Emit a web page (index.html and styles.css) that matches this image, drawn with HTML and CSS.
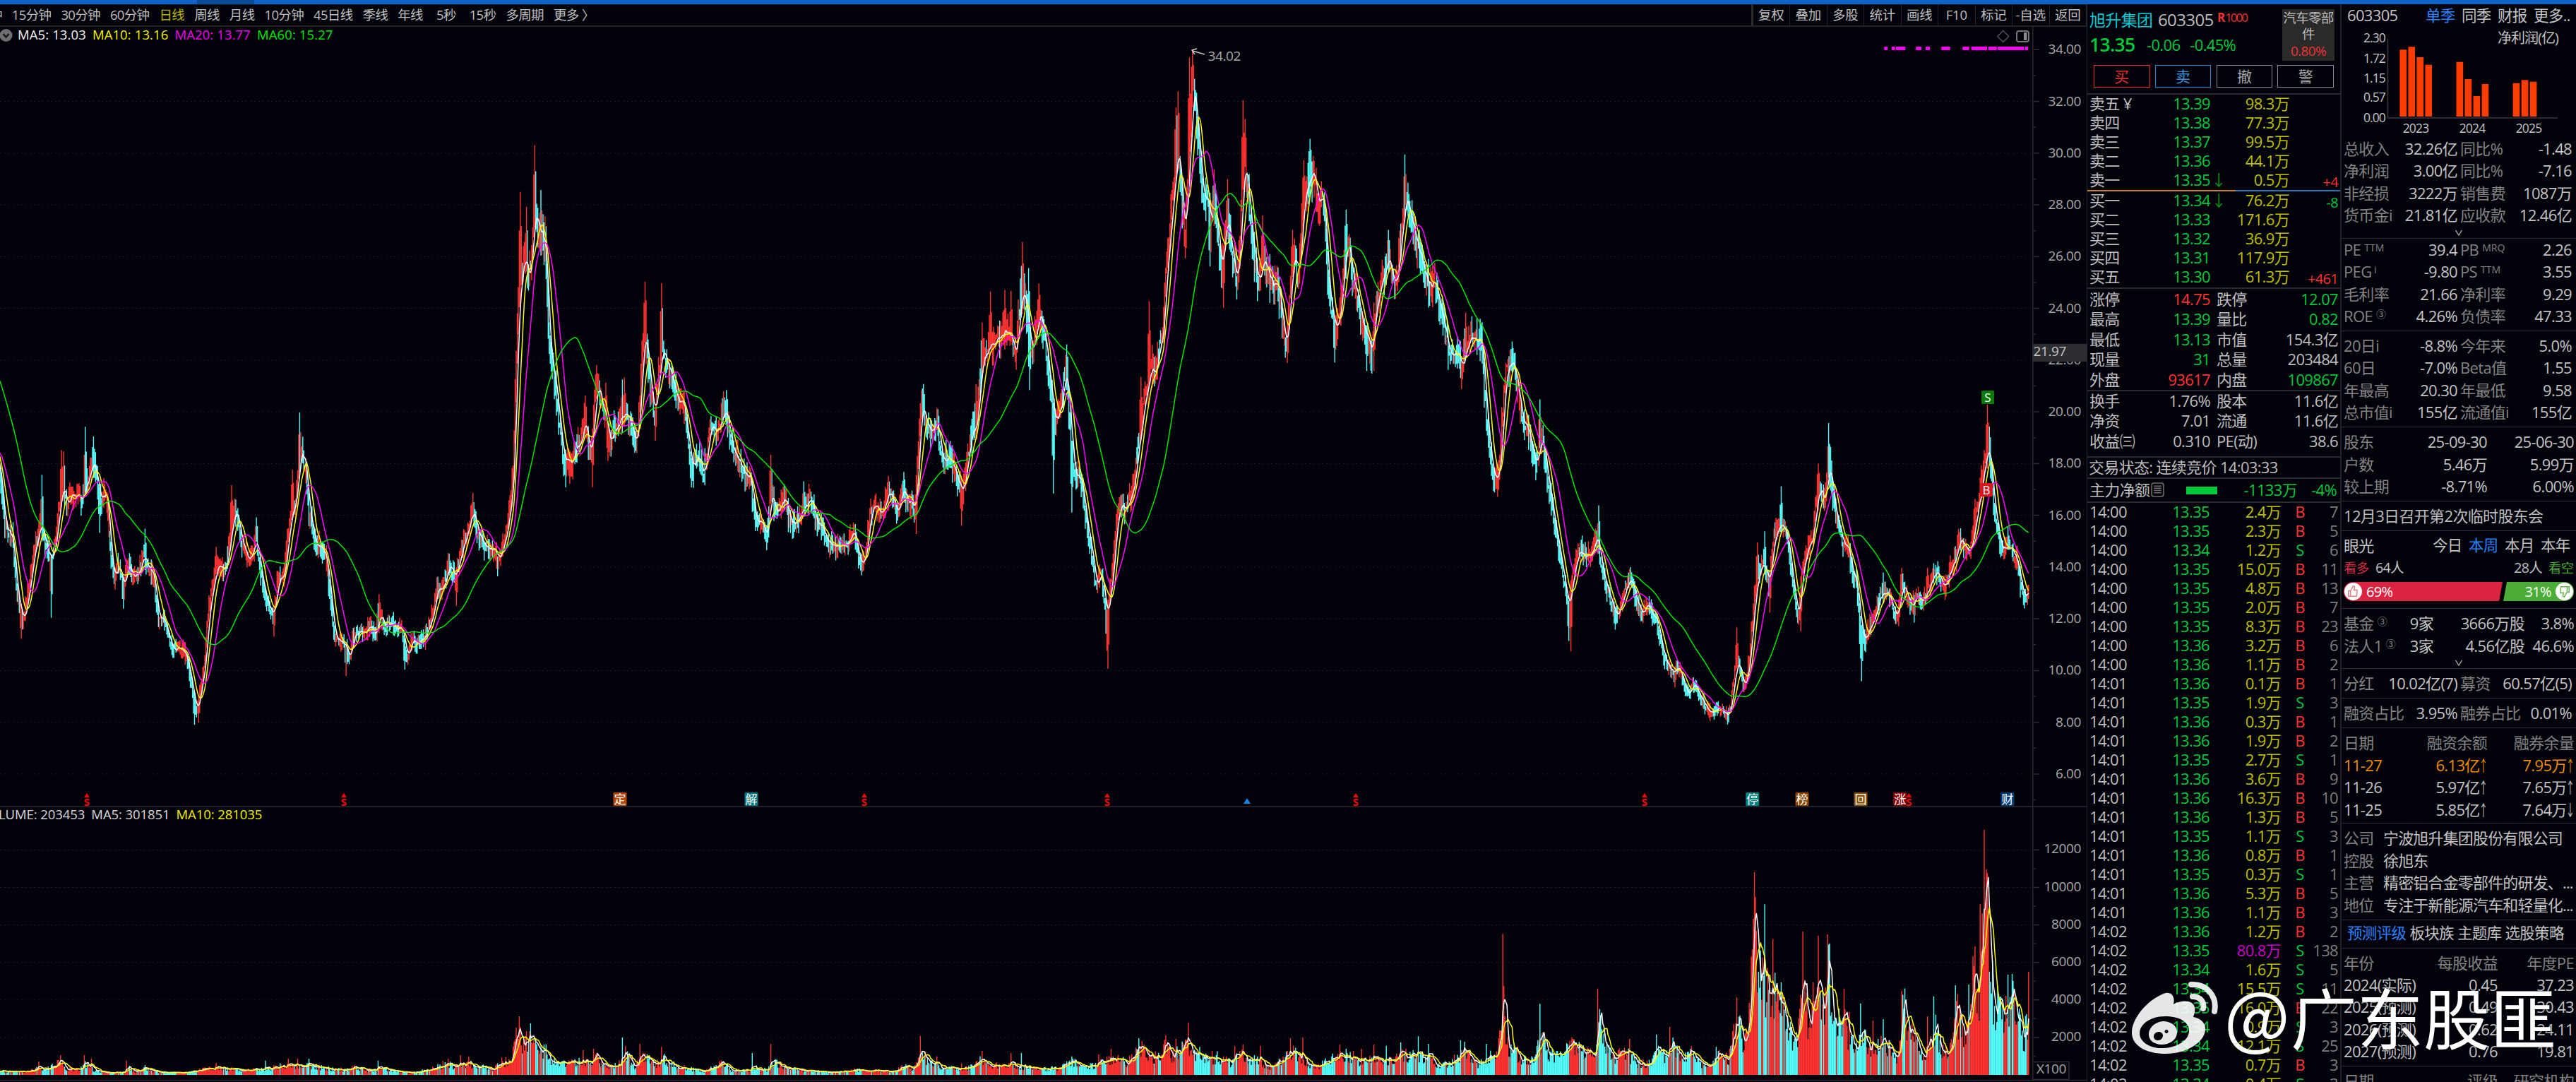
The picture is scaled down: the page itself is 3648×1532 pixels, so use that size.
FILE: index.html
```html
<!DOCTYPE html>
<html lang="zh-CN">
<head>
<meta charset="utf-8">
<title>旭升集团 603305 日线</title>
<link rel="stylesheet" href="styles.css">
</head>
<body>
<div class="titlebar"><i></i></div>
<div class="app">
  <main class="chart">
    <nav class="toolbar">
      <div class="periods"><span class="cut">钟</span><span>15分钟</span><span>30分钟</span><span>60分钟</span><span class="on">日线</span><span>周线</span><span>月线</span><span>10分钟</span><span>45日线</span><span>季线</span><span>年线</span><span class="wide">5秒</span><span class="wide">15秒</span><span>多周期</span><span>更多 〉</span></div>
      <div class="tools"><span>复权</span><span>叠加</span><span>多股</span><span>统计</span><span>画线</span><span>F10</span><span>标记</span><span>-自选</span><span>返回</span></div>
    </nav>
    <section class="pane price">
      <svg id="price" viewBox="0 38 2955 1105"></svg>
      <div class="legend top">
        <svg class="fold" viewBox="0 0 18 18"><circle cx="8.5" cy="9" r="9"/><path d="M4.5 7l4 4.5 4-4.5"/></svg>
        <span class="c-w">MA5: 13.03</span><span class="c-y">MA10: 13.16</span><span class="c-m">MA20: 13.77</span><span class="c-g">MA60: 15.27</span>
      </div>
    </section>
    <section class="pane volume">
      <svg id="volume" viewBox="0 1144 2955 388"></svg>
      <div class="legend bottom"><span>LUME: 203453</span><span>MA5: 301851</span><span class="c-y">MA10: 281035</span></div>
    </section>
  </main>

  <aside class="quote">
    <header class="head">
      <div class="id">
        <div class="name"><b>旭升集团</b><span>603305</span><em><strong>R</strong>1000</em></div>
        <div class="last"><b>13.35</b><span>-0.06</span><span>-0.45%</span></div>
      </div>
      <div class="sector">汽车零部<br>件<br><em>0.80%</em></div>
    </header>
    <div class="buttons"><button class="buy">买</button><button class="sell">卖</button><button>撤</button><button>警</button></div>
    <div class="book asks" id="asks"></div>
    <div class="book bids" id="bids"></div>
    <div class="stats five">
      <div><span>涨停</span><b class="r">14.75</b><span>跌停</span><b class="g">12.07</b></div>
      <div><span>最高</span><b class="g">13.39</b><span>量比</span><b class="g">0.82</b></div>
      <div><span>最低</span><b class="g">13.13</b><span>市值</span><b>154.3亿</b></div>
      <div><span>现量</span><b class="g">31</b><span>总量</span><b>203484</b></div>
      <div><span>外盘</span><b class="r">93617</b><span>内盘</span><b class="g">109867</b></div>
    </div>
    <div class="stats three">
      <div><span>换手</span><b>1.76%</b><span>股本</span><b>11.6亿</b></div>
      <div><span>净资</span><b>7.01</b><span>流通</span><b>11.6亿</b></div>
      <div><span>收益㈢</span><b>0.310</b><span>PE(动)</span><b>38.6</b></div>
    </div>
    <div class="status">交易状态: 连续竞价 14:03:33</div>
    <div class="flow"><span>主力净额</span>
      <svg viewBox="0 0 18 20"><rect x="1" y="1" width="16" height="18" rx="3"/><path d="M4 5h10M4 8h10M4 11h10M4 14h10"/></svg>
      <i></i><b>-1133万</b><b class="pct">-4%</b></div>
    <div class="ticks" id="ticks"></div>
  </aside>

  <aside class="info">
    <header class="tabs first"><span class="code">603305</span><span class="on">单季</span><span>同季</span><span>财报</span><span>更多..</span></header>
    <svg class="mini" id="mini" viewBox="3314 38 334 152"></svg>
    <section class="s-income">
      <div class="pair"><i>总收入</i><b>32.26亿</b><i>同比%</i><b>-1.48</b></div>
      <div class="pair"><i>净利润</i><b>3.00亿</b><i>同比%</i><b>-7.16</b></div>
      <div class="pair"><i>非经损</i><b>3222万</b><i>销售费</i><b>1087万</b></div>
      <div class="pair"><i>货币金i</i><b>21.81亿</b><i>应收款</i><b>12.46亿</b></div>
      <svg class="chev" viewBox="0 0 12 10"><path d="M1 1l5 8 5-8"/></svg>
    </section>
    <section class="s-ratio">
      <div class="pair"><i>PE <sup>TTM</sup></i><b>39.4</b><i>PB <sup>MRQ</sup></i><b>2.26</b></div>
      <div class="pair"><i>PEG<sup> i</sup></i><b>-9.80</b><i>PS <sup>TTM</sup></i><b>3.55</b></div>
      <div class="pair"><i>毛利率</i><b>21.66</b><i>净利率</i><b>9.29</b></div>
      <div class="pair"><i>ROE <sup>③</sup></i><b>4.26%</b><i>负债率</i><b>47.33</b></div>
    </section>
    <section>
      <div class="pair"><i>20日i</i><b>-8.8%</b><i>今年来</i><b>5.0%</b></div>
      <div class="pair"><i>60日</i><b>-7.0%</b><i>Beta值</i><b>1.55</b></div>
      <div class="pair"><i>年最高</i><b>20.30</b><i>年最低</i><b>9.58</b></div>
      <div class="pair"><i>总市值i</i><b>155亿</b><i>流通值i</i><b>155亿</b></div>
    </section>
    <section>
      <div class="tri"><i>股东</i><b>25-09-30</b><b>25-06-30</b></div>
      <div class="tri"><i>户数</i><b>5.46万</b><b>5.99万</b></div>
      <div class="tri"><i>较上期</i><b>-8.71%</b><b>6.00%</b></div>
    </section>
    <section><div class="line">12月3日召开第2次临时股东会</div></section>
    <section class="s-vote">
      <div class="tabs"><span class="lead">眼光</span><span>今日</span><span class="on">本周</span><span>本月</span><span>本年</span></div>
      <div class="people"><em class="long">看多</em><span>64人</span><span class="push">28人</span><em class="short">看空</em></div>
      <div class="bar"><div class="up"><svg viewBox="0 0 28 28"><circle cx="14" cy="14" r="13"/><path d="M7 13h3v8H7zM10 13l4-7c3 0 2 3 1 6h5l-1 9h-9"/></svg>69%</div><div class="down">31%<svg viewBox="0 0 28 28"><circle cx="14" cy="14" r="13"/><path d="M21 15h-3V7h3zM18 15l-4 7c-3 0-2-3-1-6H8l1-9h9"/></svg></div></div>
    </section>
    <section class="s-fund">
      <div class="quad"><i>基金 <sup>③</sup></i><b>9家</b><b>3666万股</b><b>3.8%</b></div>
      <div class="quad"><i>法人1 <sup>③</sup></i><b>3家</b><b>4.56亿股</b><b>46.6%</b></div>
      <svg class="chev" viewBox="0 0 12 10"><path d="M1 1l5 8 5-8"/></svg>
    </section>
    <section><div class="pair"><i>分红</i><b>10.02亿(7)</b><i>募资</i><b>60.57亿(5)</b></div></section>
    <section><div class="pair"><i>融资占比</i><b>3.95%</b><i>融券占比</i><b>0.01%</b></div></section>
    <section class="s-margin">
      <div class="tri"><i>日期</i><i>融资余额</i><i>融券余量</i></div>
      <div class="tri hot"><b>11-27</b><b>6.13亿<u>↑</u></b><b>7.95万<u>↑</u></b></div>
      <div class="tri"><b>11-26</b><b>5.97亿<u>↑</u></b><b>7.65万<u>↑</u></b></div>
      <div class="tri"><b>11-25</b><b>5.85亿<u>↑</u></b><b>7.64万<u>↓</u></b></div>
    </section>
    <section>
      <div class="about"><i>公司</i><span>宁波旭升集团股份有限公司</span></div>
      <div class="about"><i>控股</i><span>徐旭东</span></div>
      <div class="about"><i>主营</i><span>精密铝合金零部件的研发、...</span></div>
      <div class="about"><i>地位</i><span>专注于新能源汽车和轻量化...</span></div>
    </section>
    <section class="s-topic"><div class="topics"><span class="on">预测评级</span><span>板块族</span><span>主题库</span><span>选股策略</span></div></section>
    <section class="s-forecast">
      <div class="tri fc"><i>年份</i><i>每股收益</i><i>年度PE</i></div>
      <div class="tri fc"><b>2024(实际)</b><b>0.45</b><b>37.23</b></div>
      <div class="tri fc"><b>2025(预测)</b><b>0.49</b><b>30.43</b></div>
      <div class="tri fc"><b>2026(预测)</b><b>0.62</b><b>24.11</b></div>
      <div class="tri fc"><b>2027(预测)</b><b>0.76</b><b>19.81</b></div>
    </section>
    <section class="s-last"><div class="tri fc"><i>日期</i><i>评级</i><i>研究机构</i></div></section>
  </aside>
</div>

<div class="watermark">
  <svg viewBox="0 0 124 104">
    <path fill-rule="evenodd" d="M45 18C54 14 62 20 59 33C71 26 88 27 89 38C90 43 88 48 87 51C97 53 105 59 104 69C103 87 77 103 48 103C21 103 0 92 0 73C0 53 22 27 45 18ZM47 50C26 50 11 61 11 74C11 87 27 96 45 95C66 94 82 83 81 69C80 57 66 50 47 50Z"/>
    <path fill-rule="evenodd" d="M44 57C56 57 65 64 64 74C63 84 53 90 42 90C31 90 23 83 24 74C25 65 33 58 44 57ZM38 72C33 72 31 76 31 79C31 82 34 84 37 84C41 84 44 81 44 77C44 74 41 72 38 72ZM49 69a2.500 2.500 0 1 0 .1 0Z"/>
    <path class="wave" d="M84 5C107 4 121 22 117 43M86 22C97 22 103 30 101 39"/>
  </svg>
  <span class="at">@</span><span>广东股匪</span>
</div>
<script src="chart.js"></script>
</body>
</html>
```
FILE: styles.css
```css
* { box-sizing: border-box; }
html { height: 1532px; overflow: hidden; background: #02020a; }
body {
  margin: 0; width: 3648px; height: 1532px; overflow: hidden; position: relative;
  background: #02020a; color: #bdbdbd;
  font: 22px/27px "Open Sans", "Noto Sans CJK SC", sans-serif; letter-spacing: -0.03em;
}
b, i, em { font-weight: 400; font-style: normal; }
u { text-decoration: none; }
.titlebar { height: 6px; background: #1063c8; }
.titlebar i { display: block; width: 81px; height: 6px; margin-left: 279px; background: #0a4a98; }
.app { display: flex; height: 1526px; }

/* chart column */
.chart { width: 2955px; display: flex; flex-direction: column; }
.toolbar { height: 32px; display: flex; justify-content: space-between; border-bottom: 2px solid #242426; border-top: 1px solid #1c1c20; font-size: 18.500px; line-height: 28px; white-space: nowrap; }
.periods { display: flex; gap: 14px; margin-left: -15px; }
.periods .wide { margin-left: 5px; }
.periods .on { color: #b4b400; }
.tools { display: flex; border-left: 3px solid #2c2c2e; }
.tools span { width: 52.500px; text-align: center; border-right: 1px solid #242428; letter-spacing: -0.01em; }
.pane { position: relative; }
.pane > svg { display: block; width: 2955px; }
.price { height: 1105px; }
.volume { height: 388px; }
.price > svg { height: 1105px; overflow: visible; }
.volume > svg { height: 388px; }
.legend { position: absolute; left: 0; display: flex; font-size: 18.500px; letter-spacing: 0.006em; line-height: 22px; color: #d8d8d8; white-space: nowrap; }
.legend.top { top: 0; gap: 9px; }
.legend.bottom { top: -1px; left: -2px; gap: 9px; letter-spacing: -0.004em; }
.legend .fold { width: 18px; height: 18px; margin: 3px -2px 0 0; }
.fold circle { fill: #6e6e6e; }
.fold path { fill: none; stroke: #1a1a1a; stroke-width: 2.500; }
.c-w { color: #f4f4f4; } .c-y { color: #f0f000; } .c-m { color: #f000f0; } .c-g { color: #00e600; }

.grid { stroke: #1d1d26; stroke-width: 1; stroke-dasharray: 2 4; }
.frame { stroke: #2b2b30; stroke-width: 1.500; fill: none; }
.axis-text { fill: #a9a9a9; font-size: 19px; text-anchor: end; letter-spacing: -0.02em; }
.bars-up, .bars-down { fill: none; stroke-width: 1.400; }
.bars-up { stroke: #ff3232; } .bars-down { stroke: #54fcfc; }
.ma { fill: none; stroke-width: 1.500; stroke-linejoin: round; }
.ma5 { stroke: #fff; } .ma10 { stroke: #ff0; } .ma20 { stroke: #f0f; } .ma60 { stroke: #00e600; }
.badge-text { fill: #fff; font-size: 17px; text-anchor: middle; letter-spacing: 0; }
.dividend { fill: #ff0000; font-size: 15px; font-weight: 700; text-anchor: middle; letter-spacing: 0; }

/* quote column */
.quote { width: 359px; border-left: 1px solid #2a2a2e; white-space: nowrap; overflow: hidden; }
.head { height: 86px; display: flex; justify-content: space-between; padding: 7px 8px 0 3px; }
.name { display: flex; height: 30px; line-height: 28px; align-items: center; }
.name b { color: #00c8d2; font-size: 23px; width: 97px; }
.name span { font-size: 24px; width: 84px; letter-spacing: -0.025em; }
.name em { color: #f03232; font-size: 17px; letter-spacing: -0.12em; transform: translateY(-3px); }
.name strong { margin-right: 2px; }
.last { display: flex; align-items: center; height: 30px; margin-top: 5px; color: #00c83c; }
.last b { font-weight: 600; font-size: 26.500px; width: 81px; }
.last span { margin-right: 14px; }
.sector { width: 74px; height: 73px; background: #2a2a2a; text-align: center; font-size: 18.500px; line-height: 23px; }
.sector em { color: #f03232; line-height: 27px; font-size: 19px; }
.buttons { height: 42px; display: flex; gap: 7.300px; padding: 0 9px 8px; border-bottom: 2px solid #2a2a2e; }
.buttons button { flex: 1; padding: 0; background: none; border: 1.500px solid #8c8c8c; color: #a8a8a8; font: inherit; font-size: 21px; line-height: 26px; }
.buttons .buy { border-color: #e62d2d; color: #e62d2d; }
.buttons .sell { border-color: #3282c8; color: #3c8cd2; }
.book div { display: grid; grid-template-columns: 100px 71px 24px 88px 69px; height: 27px; line-height: 24px; padding-left: 3px; }
.book b, .stats b { text-align: right; }
.book .p { color: #00c83c; }
.book .arrow { color: #00960a; text-align: center; }
.book .v { color: #bebe00; }
.book .x { font-size: 20px; line-height: 31px; }
.asks { height: 137px; }
.asks::after { content: ""; display: block; height: 2px; background: linear-gradient(90deg, #c8821e 210px, #1e78be 210px); }
.bids { height: 138px; border-bottom: 2px solid #2a2a2e; }
.r { color: #ff3232 !important; } .g { color: #00c83c !important; } .m { color: #c800c8 !important; }
.stats { border-bottom: 2px solid #2a2a2e; }
.stats div { display: grid; grid-template-columns: 80px 91px 80px 101px; height: 28.400px; line-height: 26px; padding-left: 3px; }
.stats span:nth-child(3) { padding-left: 9px; }
.five { height: 145px; padding-top: 1px; }
.three { height: 94px; }
.status { height: 30px; line-height: 26px; padding-left: 2px; border-bottom: 2px solid #2a2a2e; }
.flow { height: 34px; display: flex; align-items: center; padding: 0 0 2px 3px; border-bottom: 2px solid #2a2a2e; }
.flow span { width: 87px; }
.flow svg { width: 19px; height: 21px; fill: none; stroke: #6e6e6e; stroke-width: 1.500; }
.flow i { width: 44px; height: 11px; background: #00c83c; margin: 2px 0 0 31px; }
.flow b { width: 113px; text-align: right; color: #00c83c; }
.flow .pct { width: 56px; }
.ticks div { display: grid; grid-template-columns: 80px 90px 101px 54px 27px; height: 27px; line-height: 24px; padding-left: 3px; }
.ticks b { text-align: right; color: #00c83c; }
.ticks .v { color: #bebe00; }
.ticks .n { color: #7d7d7d; direction: rtl; }
.ticks u { text-align: center; color: #ff3232; }

/* company info column */
.info { width: 334px; border-left: 2px solid #232328; white-space: nowrap; overflow: hidden; }
.info section { padding: 6px 3px 3.700px 3px; border-bottom: 1px solid #303034; }
.info section > div { height: 31.400px; line-height: 28.500px; }
.info i { color: #828282; }
.info b, .info span { color: #c3c3c3; }
.info sup { font-size: 14px; line-height: 0; vertical-align: 6px; letter-spacing: 0; }
.tabs { display: flex; }
.tabs span { width: 51px; font-size: 21.500px; }
.tabs .code, .tabs .lead { width: 111px; font-size: 22px; }
.tabs .lead { width: 126px; }
.tabs.first { height: 32px; line-height: 31px; padding-left: 8px; }
.info .on { color: #2882ff; }
.tabs span:last-child { width: auto; }
.mini { display: block; width: 334px; height: 152px; margin-left: -2px; }
.mini text { fill: #c3c3c3; font-size: 17.500px; letter-spacing: -0.05em; }
.mini path { stroke: #38383c; fill: none; stroke-width: 1.500; }
.mini rect { fill: #ff3c00; }
.pair { display: grid; grid-template-columns: 70px 91px 70px 92px; }
.pair i:nth-child(3) { padding-left: 4px; }
.pair b, .tri > :nth-child(n+2), .quad b { text-align: right; justify-self: end; }
.tri { display: grid; grid-template-columns: 100px 103px 123px; }
.tri.fc { grid-template-columns: 118px 100px 108px; }
.info .tri.hot b { color: #f08c00; }
.tri u { display: inline-block; transform: scaleX(.6); margin: 0 -5px 0 -6px; font-family: "Noto Sans CJK SC", sans-serif; line-height: 20px; }
.quad { display: grid; grid-template-columns: 66px 61px 129px 70px; }
.about { display: grid; grid-template-columns: 56px 1fr; letter-spacing: -0.038em; }
.info section.s-income { height: 148px; padding-top: 6px; }
.info section.s-ratio { height: 131px; padding-top: 1px; }
.chev { display: block; width: 12px; height: 9px; margin: 3px auto 0; fill: none; stroke: #aaa; stroke-width: 1.500; }
.info section.s-vote { height: 110px; }
.people { display: flex; font-size: 18.500px; }
.people em { width: 45px; } .people .long { color: #dc2846; } .people .short { color: #46aa32; width: 36px; }
.people .push { margin: 0 9px 0 auto; }
.people span { font-size: 19.500px; }
.info section .bar { height: 27px; margin-top: 3px; display: flex; font-size: 20px; line-height: 27px; color: #fff; }
.bar svg { width: 27px; height: 27px; }
.bar circle { fill: #fff; }
.bar path { fill: none; stroke: #e08080; stroke-width: 1.500; }
.bar .down path { stroke: #64b450; }
.bar .up, .bar .down { display: flex; gap: 5px; }
.bar .up { width: 225px; background: #dc2341; clip-path: polygon(0 0, 100% 0, calc(100% - 5px) 100%, 0 100%); border-radius: 13px 0 0 13px; }
.bar .down { flex: 1; justify-content: flex-end; background: #4bac37; clip-path: polygon(6px 0, 100% 0, 100% 100%, 1px 100%); border-radius: 0 13px 13px 0; }
.info section.s-fund { height: 85px; }
.info section.s-margin { height: 135px; }
.info section.s-topic { height: 40px; padding-top: 4px; }
.topics { display: flex; gap: 5px; padding-left: 5px; font-size: 21.500px; }
.info section.s-forecast { height: 167px; }
.info section.s-last { border: 0; }

.watermark { position: absolute; left: 3019px; top: 1386px; display: flex; color: #fff; font: 94px/104px "Noto Sans CJK SC", sans-serif; letter-spacing: 0; text-shadow: 0 1px 5px rgba(0, 0, 0, .6); white-space: nowrap; }
.watermark svg { width: 124px; height: 104px; margin-top: 3px; fill: #fff; fill-opacity: .9; }
.watermark .wave { fill: none; stroke: #fff; stroke-opacity: .9; stroke-width: 8; stroke-linecap: round; }
.watermark .at { width: 94px; margin-left: 7px; font-size: 98px; line-height: 94px; }
```
FILE: chart.js
```js
// ---------- data ----------
// Every block holds traced samples on its own scale: [originX, originY, scaleX, scaleY, "x,y x,y ..."]
const PRICE = [
  [0, 0, 1, 1, '-95,430 -50,455 -36,560 -28,640 -10,630'],
  [0, 450, 1.568, 2.178, '0,450 5,500 15,640 32,680 42,850 55,935 63,880 72,800 83,700 95,620 105,700 118,755 128,690 135,570 143,520 153,590 160,560 175,540 185,560 200,505 210,430 218,490 228,570 236,520 244,600 250,740 258,810 268,760 278,835 286,755 296,790 308,800 322,730 335,770 344,790 353,910 366,925 378,985 390,1025 408,1020 420,1050 430,1130 440,1215 450,1140 458,1080 466,920 476,830 485,780 497,765 506,775 513,700 522,598 532,620 542,700 553,745 563,725 573,685 583,790 595,860 611,915 622,800 633,810 645,650 653,575 660,590 667,430 675,420 684,480 690,600 703,690 718,715 728,730 738,860 748,985 760,990 772,1020 780,1065 788,980 800,970 815,970 825,955 838,970 850,910 860,950 873,940 884,965 892,945 908,1048 918,1000 935,1000 950,975 963,920 975,830 988,840 1000,755 1015,795 1030,720 1045,640 1054,595 1065,660 1080,710 1092,715 1100,700 1110,755 1120,700 1133,620'],
  [680, 190, 3, 3, '143,1500 150,1430 158,1050 165,800 172,720 180,640 190,570 198,515 205,570 212,590 222,560 230,440 237,360 245,360 255,400 265,435 275,430 285,500 292,650 300,870 308,970 318,1010 330,1080 345,1250 360,1370 370,1390 385,1390 400,1380 412,1330 422,1300 435,1330 450,1215 460,1290 475,1370 485,1300 495,1150 503,1065 515,1100 530,1150 545,1230 560,1325 575,1260 590,1240 605,1210 617,1165 632,1190 645,1230 657,1300 668,1325 680,1230 690,1050 700,880 709,840 720,960 732,1110 748,1190 760,1110 772,960 783,905 797,960 812,1010 828,1060 845,1130 858,1160 870,1130 885,1250 900,1400 910,1435 920,1380 933,1360 945,1410 957,1450 970,1350 985,1230 1000,1230 1015,1265 1030,1210 1046,1165 1060,1230 1075,1320 1090,1370 1110,1380 1125,1430 1140,1460 1155,1450'],
  [1000, 50, 1.568, 1.742, '108,1150 116,1215 125,1190 138,1250 148,1130 160,1180 172,1150 180,1140 190,1200 205,1205 218,1160 235,1145 248,1200 262,1215 280,1255 300,1255 318,1250 330,1220 345,1300 358,1295 368,1180 380,1160 395,1190 410,1125 420,1140 430,1185 440,1120 450,1155 462,1150 468,1175 474,1040 482,910 492,950 505,990 515,950 530,1050 543,1035 557,1080 573,1130 585,1040 595,970 603,970 610,870 618,795 630,785 645,750 655,750 670,730 680,730 693,775 700,670 709,605 716,680 727,800 737,730 747,685 755,730 765,830 778,955 790,930 803,820 812,950 820,1080 835,1090 848,1200 860,1280 872,1365 882,1320 893,1440 905,1340 915,1210 925,1160 937,1175 945,1140 955,1100 963,1010 972,940 982,870 990,805 1000,850 1010,760 1018,750 1025,580 1035,470 1044,350 1051,260 1058,380 1067,495 1075,330 1083,145 1090,160 1098,270 1107,400 1115,390 1125,480 1135,430 1149,580 1160,440 1170,510 1184,620 1192,440 1200,300 1210,420 1222,560 1232,610 1242,560 1253,590 1263,625 1272,600 1283,700 1293,770 1301,620 1308,530 1320,580 1330,400 1340,370 1349,335 1362,410 1375,400 1385,600 1400,730 1412,680 1420,560 1430,505 1440,600 1455,660 1465,740 1482,785 1492,650 1505,600 1520,545 1535,640 1545,520 1557,405 1568,450 1592,561'],
  [2000, 400, 1.6505, 2.0103, '40,5 50,20 60,0 72,80 85,160 95,210 108,190 120,245 130,200 145,150 155,160 166,160 175,330 185,480 195,545 205,560 213,430 221,270 230,250 236,225 247,270 258,370 270,410 280,450 293,515 301,450 307,440 315,500 325,590 337,690 350,790 360,850 370,930 378,850 388,790 398,755 410,780 420,780 430,750 438,720 448,830 460,870 470,920 483,945 495,900 503,860 512,850 525,890 540,940 553,915 563,950 577,960 588,1050 600,1090 615,1115 622,1100 635,1120 650,1180 658,1140 668,1150 680,1190 695,1220 708,1220 720,1205 730,1215 738,1230 748,1220 755,1130 765,1075 778,1150 788,1120 797,1000 805,890 815,820 826,790 838,860 848,740 858,700 869,685 880,730 892,850 907,950 915,820 928,750 940,730 948,620 957,590 966,620 973,560 980,515 987,600 997,680 1008,740 1018,740 1030,810 1043,860 1052,970 1060,1025 1070,985 1085,950 1100,880 1112,880 1125,920 1138,955 1150,860 1160,890 1172,930 1182,890 1197,905 1210,870 1222,825 1235,830 1248,865 1262,820 1275,780 1285,730 1297,760 1308,765 1320,680 1335,580 1343,500 1352,470 1360,580 1370,700 1380,750 1395,740 1410,765 1420,800 1430,890 1437,900 1443,880 1450,870']
];
const EXTREMES = [
  [0, 450, 1.568, 2.178, '189,336 137,408 92,484 207,366 515,516 666,292 322,650 842,852 1049,540 650,468 570,615 480,706 142,412 47,990 113,925 273,897 433,1255 440,1248 609,983 769,1104 899,1085 1106,797 221,663 1014,888'],
  [680, 190, 3, 3, '169,245 196,308 232,47 260,237 268,340 277,348 700,627 772,632 606,1042 615,1033 534,1055 495,980 445,1110 1047,1087 1033,1092 475,1500 897,1500 363,1500 380,1485 545,1388 745,1303 655,1353'],
  [1000, 50, 1.568, 1.742, '1049,138 1043,178 1073,55 1080,35 1083,92 1193,160 1196,207 1340,255 1348,297 1328,308 1552,294 1127,330 1158,355 1236,444 1301,480 702,510 632,632 612,708 664,628 676,630 740,612 716,574 482,860 515,922 144,1035 45,876 984,656 965,842 1421,430 1514,480 801,762 600,860 772,1130 893,1562 890,1518 812,1177 568,1210 1396,807 1466,828 1482,828 1290,808 1148,672 1118,570 1065,550 719,875 467,1230 344,1332 217,1100 404,1087 438,1077 134,1270'],
  [2000, 400, 1.6505, 2.0103, '125,86 234,168 299,333 435,634 396,720 510,810 759,982 863,580 850,670 824,708 808,740 948,515 972,400 979,468 1101,825 1143,812 1205,812 1276,702 1316,616 1330,520 1343,348 1348,410 1393,695 199,610 192,597 370,1050 367,1020 475,988 737,1258 613,1153 836,940 907,993 1051,1135 1048,1065 1173,968 1432,928 115,303 1138,978']
];
const VOLUME = [
  [0, 1380, 0.784, 3, '0,412 30,415 45,400 55,402 68,370 78,402 90,402 97,382 107,408 120,418 140,418 146,392 152,415 165,400 180,418 200,420 220,412 235,395 255,402 270,408 290,405 310,392 320,385 345,388 370,402 390,405 397,392 410,410 425,398 440,412 460,418 480,405 498,378 508,392 515,375 528,385 548,402 560,375 570,365 577,240 585,285 592,265 600,330 606,310 615,365 625,375 640,375 650,355 657,380 665,350 680,398 688,380 697,332 707,400 716,328 728,385 740,358 755,390 775,405 785,412 803,380 815,408 838,410 845,400 855,405 860,370 875,395 895,410 930,418 950,405 965,410 995,412 1005,390 1018,402 1023,320 1035,375 1050,395 1070,405 1085,390 1093,355 1105,385 1115,390 1125,375 1135,395 1160,402 1180,398 1192,368 1205,395 1220,385 1235,355 1255,370 1268,310 1285,350 1297,305 1305,345 1322,300 1340,355 1355,350 1370,375 1382,335 1400,370 1412,395 1425,370 1435,320 1450,370 1465,395 1480,360 1495,340 1510,370 1520,355 1540,375 1560,340'],
  [2000, 1120, 1.6505, 3, '0,1125 30,1125 60,1155 90,1165 105,1130 125,1110 160,1160 190,1125 205,1105 210,1050 217,910 228,1070 240,1085 260,1140 290,1145 300,1080 307,1035 320,1120 350,1130 378,1085 400,1100 430,1115 436,1010 443,955 455,1070 475,1130 505,1110 530,1155 565,1160 575,1100 595,1120 612,1050 630,1130 655,1120 680,1160 705,1165 720,1120 745,1135 757,1010 765,960 780,1085 790,960 800,700 808,580 820,780 828,740 840,920 850,840 860,900 868,880 880,1010 905,1070 918,850 935,990 950,860 962,940 980,750 990,880 1005,1010 1012,960 1030,1060 1045,1100 1058,990 1070,1090 1085,1110 1105,1060 1140,1130 1147,960 1153,880 1165,1040 1180,1040 1195,1120 1210,1090 1225,980 1240,1085 1255,1100 1270,1060 1278,920 1295,1030 1310,900 1322,790 1332,850 1342,640 1348,540 1356,730 1365,850 1380,950 1395,890 1412,870 1425,980 1435,1050 1443,960 1450,960']
];
const VOLUME_PEAKS = [
  [0, 1380, 0.784, 3, '67,345 43,372 94,345 101,360 141,368 161,387 240,378 295,368 320,360 331,360 343,360 420,368 497,360 511,345 521,350 557,355 562,353 573,228 577,180 589,210 604,300 647,323 659,318 691,270 694,307 711,297 735,310 835,336 856,297 1022,263 1040,350 1068,380 1090,327 1122,336 1134,336 1190,350 1220,342 1233,318 1264,273 1276,323 1294,261 1306,275 1319,207 1332,310 1346,327 1371,307 1380,300 1400,305 1433,273 1446,270 1478,350 1488,300 1495,318 1502,327 1512,318 1525,300 1539,305 1555,290'],
  [2000, 1120, 1.6505, 3, '14,1045 38,1077 112,1062 122,1068 172,1077 212,610 215,830 298,907 373,1050 434,843 508,1055 571,1037 603,1005 652,1087 710,1090 759,880 799,348 823,484 843,632 848,775 862,815 912,600 938,815 948,618 970,612 973,655 1009,843 1021,942 1048,905 1143,550 1145,852 1205,960 1219,875 1270,828 1274,865 1302,825 1311,705 1316,663 1327,484 1331,523 1338,168 1341,335 1344,352 1393,783 1403,780 1408,848 1440,770 1101,972 1076,978']
];

const expand = (blocks) => blocks.flatMap(([ox, oy, sx, sy, s]) =>
  s.split(' ').map((p) => { const [x, y] = p.split(',').map(Number); return [ox + x / sx, oy + y / sy]; }));
const lerpAt = (pts) => { let i = 0; return (x) => {
  while (i < pts.length - 2 && pts[i + 1][0] < x) i++;
  const [a, b] = [pts[i], pts[i + 1]];
  const t = Math.max(0, Math.min(1, (x - a[0]) / (b[0] - a[0])));
  return a[1] + (b[1] - a[1]) * t;
}; };
let seed = 20251;
const rnd = () => { seed = (seed * 1664525 + 1013904223) % 4294967296; return seed / 4294967296; };

const STEP = 1.46, FIRST = -62, COUNT = Math.floor(2873 / STEP);
const priceY = (p) => 70.3 + (34 - p) * 36.63;
const base = 1523;
const at = lerpAt(expand(PRICE)), volAt = lerpAt(expand(VOLUME));
const bars = [];
let prev = null, mood = true;
for (let i = FIRST; i <= COUNT; i++) {
  const x = i * STEP + 1;
  const level = at(x + 3);
  const unit = 3.5 + (1150 - level) * 0.016;
  const close = level + (rnd() - 0.5) * unit * 1.8;
  const open = prev === null ? close : prev + (rnd() - 0.5) * unit * 0.6;
  const hi = Math.min(open, close) - rnd() * unit * 1.5 - 1;
  const lo = Math.max(open, close) + rnd() * unit * 1.5 + 1;
  const h = Math.max(2, (base - volAt(Math.max(0, x + 3))) * (0.56 + rnd() * 0.74));
  if (rnd() < 0.6) mood = close < open;
  bars.push({ x, close, hi, lo, up: mood, h });
  prev = close;
}
const nearest = (x) => Math.max(0, Math.min(bars.length - 1, Math.round((x - 1) / STEP) - FIRST));
for (const [x, y] of expand(EXTREMES)) {
  const i = nearest(x), mid = bars[i].close;
  [[0, 1], [-1, 0.55], [1, 0.6]].forEach(([d, k]) => {
    const b = bars[i + d]; if (!b) return;
    const target = mid + (y - mid) * k;
    if (y < mid) b.hi = Math.min(b.hi, target); else b.lo = Math.max(b.lo, target);
  });
}
for (const [x, y] of expand(VOLUME_PEAKS)) bars[nearest(x)].h = base - y;

const mean = (key, n) => bars.map((b, i) => {
  let s = 0, c = 0;
  for (let k = Math.max(0, i - n + 1); k <= i; k++) { s += bars[k][key]; c++; }
  return s / c;
});
const f = (n) => n.toFixed(1);
const trace = (vals, fn, cls) => `<path class="ma ${cls}" d="M${vals.map((v, i) => [bars[i].x, fn(v)]).slice(-FIRST - 1).map((p) => f(p[0]) + ' ' + f(p[1])).join('L')}"/>`;
const sticks = (up, fn) => `<path class="bars-${up ? 'up' : 'down'}" d="${bars.filter((b) => b.x > -1 && b.up === up).map(fn).join('')}"/>`;
const same = (v) => v;

// ---------- price pane ----------
let s = '';
for (let p = 6; p <= 34; p += 2) {
  const y = priceY(p);
  if (p < 34) s += `<path class="grid" d="M0 ${f(y)}H2878"/>`;
  s += `<path class="frame" d="M2880 ${f(y)}h8M2880 ${f(y + 36.6)}h3"/><text class="axis-text" x="2947" y="${f(y + 6)}">${p.toFixed(2)}</text>`;
}
s += '<path class="frame" d="M2878.700 38V1143M0 1142H2955"/>';
const candle = (b) => `M${f(b.x)} ${f(b.hi)}V${f(b.lo)}`;
s += sticks(false, candle) + sticks(true, candle);
s += trace(mean('close', 5), same, 'ma5') + trace(mean('close', 10), same, 'ma10') + trace(mean('close', 20), same, 'ma20') + trace(mean('close', 60), same, 'ma60');
s += '<path d="M1706 77L1689 72M1695 69l-7 2 4 6" fill="none" stroke="#c8c8c8" stroke-width="1.500"/><text class="axis-text" x="1757" y="86">34.02</text>';
[[685, 699], [717, 731], [735, 775], [820, 843], [861, 879], [928, 965], [1018, 1046], [1055, 1122], [1127, 1163], [1167, 1280], [1284, 1297]]
  .forEach(([a, b]) => { s += `<rect x="${f(2440 + a / 3)}" y="66" width="${f((b - a) / 3)}" height="5" fill="#f0f"/>`; });
s += '<path d="M2836.700 43.500l8 8-8 8-8-8z" fill="none" stroke="#58585c" stroke-width="1.300"/><rect x="2856" y="44" width="17" height="15" rx="3" fill="none" stroke="#77777a" stroke-width="2"/><rect x="2866" y="46" width="4.500" height="11" fill="#8c8c8f"/>';
s += '<rect x="2879" y="487" width="76" height="25" fill="#2d2e32"/><text class="axis-text" x="2926" y="504" style="fill:#c4c4c4">21.97</text>';
const badge = (x, y, t, c, w = 19) => `<rect x="${x - w / 2}" y="${y - 10}" width="${w}" height="19" rx="1.500" fill="${c}"/><text class="badge-text" x="${x}" y="${y + 6}">${t}</text>`;
s += badge(2815, 563, 'S', '#0a780a', 18) + badge(2813, 694, 'B', '#dc141e', 18);
s += badge(878, 1132, '定', '#b4460a') + badge(1064, 1132, '解', '#0a7882') + badge(2481.7, 1132, '停', '#008282') + badge(2552, 1132, '榜', '#8c4600') + badge(2635, 1132, '回', '#8c5000') + badge(2690.7, 1132, '涨', '#8c0000') + badge(2843, 1132, '财', '#003c78');
[123, 487, 1224, 1568, 1920, 2329, 2703.5].forEach((x) => { s += `<path d="M${x - 4} 1129l4-6 4 6z" fill="#f00"/><text class="dividend" x="${x}" y="1141">S</text>`; });
s += '<path d="M1761 1138l5-8 5 8z" fill="#1482e6"/>';
document.getElementById('price').innerHTML = s;

// ---------- volume pane ----------
let v = '';
for (let n = 2000; n <= 12000; n += 2000) {
  const y = base - n * 0.02655;
  v += `<path class="grid" d="M0 ${f(y)}H2878"/><path class="frame" d="M2880 ${f(y)}h8M2880 ${f(y + 26.5)}h3"/><text class="axis-text" x="2947" y="${f(y + 5)}">${n}</text>`;
}
const column = (b) => `M${f(b.x)} ${base}V${f(base - b.h)}`;
v += sticks(false, column) + sticks(true, column);
v += trace(mean('h', 5), (h) => base - h, 'ma5') + trace(mean('h', 10), (h) => base - h, 'ma10');
v += '<path class="frame" d="M2878.700 1144V1530M0 1530.500H2955M2879 1504.500h51v25h-51"/><text class="axis-text" x="2926" y="1521">X100</text>';
document.getElementById('volume').innerHTML = v;

// ---------- quarterly profit ----------
let m = '<path d="M3381.500 55V167H3622"/><text x="3537" y="61" style="font-size:20px">净利润(亿)</text>';
[['2.30', 54], ['1.72', 82.5], ['1.15', 111], ['0.57', 138], ['0.00', 167]].forEach(([t, y]) => { m += `<text x="3378" y="${y + 6}" text-anchor="end">${t}</text>`; });
[[3421, 2023], [3501, 2024], [3581, 2025]].forEach(([x, t]) => { m += `<text x="${x}" y="188" text-anchor="middle">${t}</text>`; });
[[1007, 211], [1034, 199], [1061, 243], [1088, 275], [1187, 263], [1214, 336], [1241, 408], [1268, 357], [1367, 353], [1394, 340], [1421, 347]]
  .forEach(([x, y]) => { m += `<rect x="${f(2950 + x / 2.246)}" y="${f(y / 3)}" width="9.700" height="${f(165 - y / 3)}"/>`; });
document.getElementById('mini').innerHTML = m;

// ---------- order book and trades ----------
const book = (rows) => rows.map(([n, p, a, q, x]) => `<div><span>${n}</span><b class="p">${p}</b><span class="arrow">${a}</span><b class="v">${q}万</b><b class="x ${x[0] === '+' ? 'r' : 'g'}">${x}</b></div>`).join('');
document.getElementById('asks').innerHTML = book([['卖五 ¥', '13.39', '', '98.3', ''], ['卖四', '13.38', '', '77.3', ''], ['卖三', '13.37', '', '99.5', ''], ['卖二', '13.36', '', '44.1', ''], ['卖一', '13.35', '↓', '0.5', '+4']]);
document.getElementById('bids').innerHTML = book([['买一', '13.34', '↓', '76.2', '-8'], ['买二', '13.33', '', '171.6', ''], ['买三', '13.32', '', '36.9', ''], ['买四', '13.31', '', '117.9', ''], ['买五', '13.30', '', '61.3', '+461']]);
const trades = `14:00 35 2.4 B 7;14:00 35 2.3 B 5;14:00 34 1.2 S 6;14:00 35 15.0 B 11;14:00 35 4.8 B 13;14:00 35 2.0 B 7;14:00 35 8.3 B 23;14:00 36 3.2 B 6;14:00 36 1.1 B 2;14:01 36 0.1 B 1;14:01 35 1.9 S 3;14:01 36 0.3 B 1;14:01 36 1.9 B 2;14:01 35 2.7 S 1;14:01 36 3.6 B 9;14:01 36 16.3 B 10;14:01 36 1.3 B 5;14:01 35 1.1 S 3;14:01 36 0.8 B 1;14:01 35 0.3 S 1;14:01 36 5.3 B 5;14:01 36 1.1 B 3;14:02 36 1.2 B 2;14:02 35 80.8 S 138;14:02 34 1.6 S 5;14:02 34 15.5 S 11;14:02 35 16.0 B 22;14:02 34 0.9 S 3;14:02 34 12.1 S 25;14:02 35 0.7 B 3;14:02 34 0.4 S 3`;
document.getElementById('ticks').innerHTML = trades.split(';').map((row) => {
  const [t, p, q, d, n] = row.split(' ');
  return `<div><span>${t}</span><b>13.${p}</b><b class="v ${+q > 50 ? 'm' : ''}">${q}万</b><u class="${d === 'S' ? 'g' : ''}">${d}</u><b class="n">${n}</b></div>`;
}).join('');
```
